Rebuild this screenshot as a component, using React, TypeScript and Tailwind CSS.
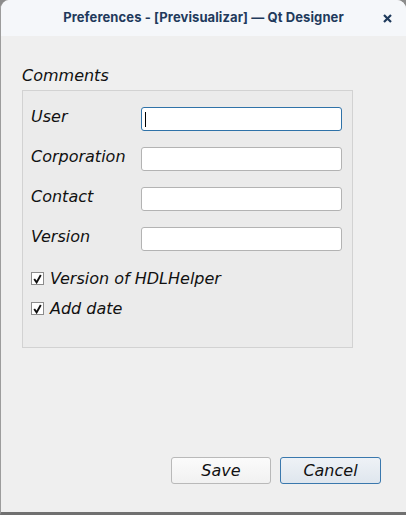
import React from 'react';

const fields = ['User', 'Corporation', 'Contact', 'Version'];
const checks = ['Version of HDLHelper', 'Add date'];

function CheckBox({ label }: { label: string }) {
  return (
    <div className="flex items-center h-[19px]">
      <div className="w-[13px] h-[13px] bg-white border border-[#8c8c8c] flex items-center justify-center">
        <svg width="9" height="10" viewBox="0 0 9 10">
          <path d="M1.2 5 L3.6 8.4 L7.8 1" fill="none" stroke="#111" strokeWidth="1.9" />
        </svg>
      </div>
      <span className="ml-[6px] italic text-[16px] leading-[19px] text-[#111]">{label}</span>
    </div>
  );
}

export default function App() {
  return (
    <div className="w-[406px] h-[515px] bg-[#8c8c8c]" style={{ fontFamily: '"DejaVu Sans", sans-serif' }}>
      <div className="w-full h-full flex flex-col bg-[#efefef] rounded-t-[9px] border-l border-[#9c9c9c] border-b-[3px] border-b-[#707070] overflow-hidden">
        {/* title bar */}
        <div className="relative h-[36px] shrink-0 bg-[#f5f7fa] flex items-center justify-center">
          <span
            className="text-[13px] font-bold text-[#1f3a5c] tracking-[0.1px]"
            style={{ fontFamily: 'Inter, "Noto Sans", sans-serif' }}
          >
            Preferences - [Previsualizar] — Qt Designer
          </span>
          <svg className="absolute right-[14px] top-[14px]" width="9" height="9" viewBox="0 0 9 9">
            <path d="M1 1 L8 8 M8 1 L1 8" stroke="#1f3a5c" strokeWidth="2.2" />
          </svg>
        </div>

        <div className="flex-1 flex flex-col pl-[21px]">
          <div className="mt-[30px] italic text-[16px] leading-[20px] text-[#111]">Comments</div>
          <div className="mt-[4px] w-[331px] h-[258px] bg-[#ebebeb] border border-[#d2d2d2] pl-[8px] pt-[16px]">
            <div className="flex flex-col gap-[16px]">
              {fields.map((f, i) => (
                <div key={f} className="flex items-start h-[24px]">
                  <span className="w-[110px] italic text-[16px] leading-[19px] text-[#111]">{f}</span>
                  <div
                    className={
                      i === 0
                        ? 'w-[201px] h-[24px] bg-white rounded-[3px] border border-[#2f72a8] flex items-center pl-[3px]'
                        : 'w-[201px] h-[24px] bg-white rounded-[3px] border border-[#b3b3b3]'
                    }
                  >
                    {i === 0 && <span className="w-[1px] h-[15px] bg-black" />}
                  </div>
                </div>
              ))}
            </div>
            <div className="mt-[18px] flex flex-col gap-[11px]">
              {checks.map((c) => (
                <CheckBox key={c} label={c} />
              ))}
            </div>
          </div>

          <div className="flex-1" />

          <div className="flex justify-end gap-[9px] pr-[25px] mb-[28px]">
            <button className="w-[100px] h-[27px] rounded-[3px] border border-[#b9b9b9] bg-gradient-to-b from-[#fbfbfb] to-[#f1f1f1] italic text-[16px] leading-[19px] text-[#111]">
              Save
            </button>
            <button className="w-[101px] h-[27px] rounded-[3px] border border-[#3a78ad] bg-gradient-to-b from-[#eef2f6] to-[#dfe6ee] italic text-[16px] leading-[19px] text-[#111]">
              Cancel
            </button>
          </div>
        </div>
      </div>
    </div>
  );
}
